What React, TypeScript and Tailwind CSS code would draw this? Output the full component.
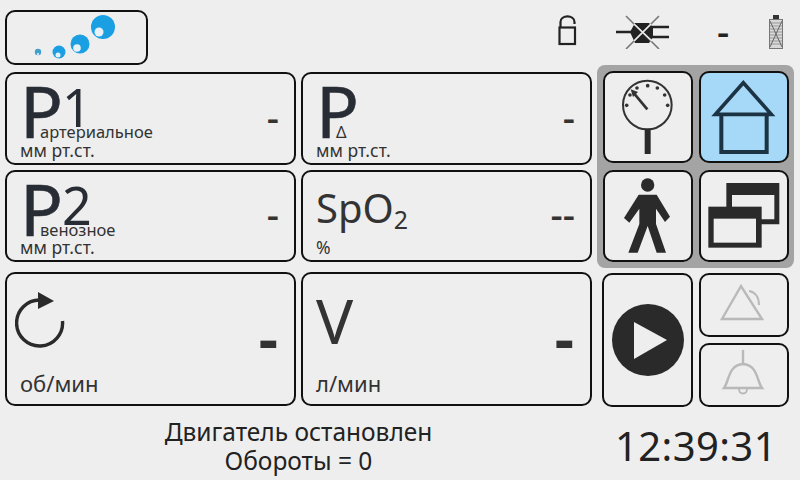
import type { ReactNode } from 'react'

const font = "font-['Noto_Sans',sans-serif]"

function Logo() {
  return (
    <svg viewBox="0 0 139 51" className="h-[51px] w-[139px]">
      <circle cx="96" cy="15" r="12" fill="#1a9fe3" />
      <circle cx="92" cy="20" r="4.5" fill="#e8f2f6" />
      <circle cx="73" cy="32" r="9.5" fill="#1a9fe3" />
      <circle cx="70" cy="36" r="3.8" fill="#e8f2f6" />
      <circle cx="52" cy="40" r="6.5" fill="#1a9fe3" />
      <circle cx="51" cy="43" r="2.5" fill="#e8f2f6" />
      <circle cx="31" cy="40" r="3.2" fill="#3f9fce" />
      <circle cx="31" cy="42" r="1.1" fill="#e8f2f6" />
    </svg>
  )
}

function Lock() {
  return (
    <svg viewBox="0 0 20 36" className="h-[36px] w-[20px]">
      <rect x="2.5" y="14.5" width="15.5" height="16.5" fill="none" stroke="#222" strokeWidth="2.2" />
      <path d="M3.5 14V9c0-7.500 14-7.500 14 0v2" fill="none" stroke="#222" strokeWidth="2.2" />
    </svg>
  )
}

function Connector() {
  return (
    <svg viewBox="0 0 56 36" className="h-[36px] w-[56px]">
      <path d="M1 19h16M37 14h17M37 24h17" stroke="#222" strokeWidth="2.4" />
      <path d="M15 19l5-9h14l4 4v10l-4 6H20z" fill="#222" />
      <path d="M11 3l33 33M44 3L11 36" stroke="#777" strokeWidth="1.6" />
      <path d="M19 11l18 17M36 11L19 28" stroke="#eee" strokeWidth="1.6" />
    </svg>
  )
}

function Battery() {
  return (
    <svg viewBox="0 0 16 36" className="h-[36px] w-[16px]">
      <rect x="5" y="2" width="6" height="4" fill="#333" />
      <rect x="1.5" y="6.500" width="13" height="29" fill="#d8d8d8" stroke="#777" strokeWidth="1" />
      <path d="M2 10h12M2 13h12M2 16h12M2 19h12M2 22h12M2 25h12M2 28h12M2 31h12" stroke="#999" strokeWidth="1" />
      <path d="M2 8l12 26M14 8L2 34" stroke="#666" strokeWidth="1" />
    </svg>
  )
}

function Gauge() {
  const dots = [
    [110, 136], [120, 105], [141, 84], [173, 77], [202, 84], [224, 105], [233, 136],
  ]
  return (
    <svg viewBox="45 39 258 264" className="size-full">
      <circle cx="172" cy="135" r="73" fill="none" stroke="#333" strokeWidth="6" />
      {dots.map(([x, y]) => (
        <circle key={x} cx={x} cy={y} r="5.5" fill="#333" />
      ))}
      <path d="M172 148l-40-48" stroke="#333" strokeWidth="8" />
      <path d="M122 88l22 8-15 15z" fill="#333" />
      <rect x="164" y="208" width="18" height="74" fill="#2a2a2a" />
    </svg>
  )
}

function House() {
  return (
    <svg viewBox="335 39 258 264" className="size-full">
      <path d="M462 68L378 163H546Z" fill="none" stroke="#1c3343" strokeWidth="11" />
      <path d="M396 163V276H532V163" fill="none" stroke="#1c3343" strokeWidth="12" />
    </svg>
  )
}

function Person() {
  return (
    <svg viewBox="45 336 258 264" className="size-full">
      <circle cx="173" cy="375" r="20" fill="#2a2a2a" />
      <path
        d="M146 404H200L240 470 225 486 198 446V492L228 578H200L173 498 143 578H115L148 492V446L118 488 102 474Z"
        fill="#2a2a2a"
      />
    </svg>
  )
}

function Windows() {
  return (
    <svg viewBox="335 336 258 264" className="size-full">
      <path fillRule="evenodd" d="M411 369H570V493H411ZM428 405V478H555V405Z" fill="#2a2a2a" />
      <rect x="357" y="440" width="160" height="123" fill="#2a2a2a" />
      <rect x="373" y="476" width="127" height="72" fill="#eee" />
    </svg>
  )
}

function Play() {
  return (
    <svg viewBox="0 0 72 72" className="h-[72px] w-[72px]">
      <circle cx="36" cy="36" r="36" fill="#2a2a2a" />
      <path d="M22 18L55 36 22 55Z" fill="#eee" />
    </svg>
  )
}

function AlarmTriangle() {
  return (
    <svg viewBox="0 0 50 44" className="h-[44px] w-[50px]">
      <path d="M22 3L3 36H43Z" fill="none" stroke="#b9b9b9" strokeWidth="2.4" />
      <path d="M30 8c6 1 10 6 10 14" fill="none" stroke="#b9b9b9" strokeWidth="2" />
    </svg>
  )
}

function Bell() {
  return (
    <svg viewBox="0 0 50 52" className="h-[52px] w-[50px]">
      <path d="M24 1v14" stroke="#b9b9b9" strokeWidth="2.4" />
      <path d="M5 39c5-6 4-23 19-24 15 1 14 18 19 24Z" fill="none" stroke="#b9b9b9" strokeWidth="2.4" />
      <path d="M20 40c0 6 8 6 8 0" fill="none" stroke="#b9b9b9" strokeWidth="1.8" />
    </svg>
  )
}

function Rotation() {
  return (
    <svg viewBox="0 0 56 60" className="h-[60px] w-[56px]">
      <path d="M47.500 33A23 23 0 1 1 25 12" fill="none" stroke="#2a2a2a" strokeWidth="3.4" />
      <path d="M23 4L39 13 23 21Z" fill="#2a2a2a" />
    </svg>
  )
}

type CardProps = {
  label: ReactNode
  sub?: string
  unit: string
  value: string
}

function Card({ label, sub, unit, value }: CardProps) {
  return (
    <div className="flex h-full items-center justify-between rounded-[10px] border-2 border-[#111] pl-[13px] pr-[15px]">
      <div className="flex h-full flex-col justify-between pb-[3px]">
        <div className="relative h-[60px]">
          {label}
          {sub && (
            <span className="absolute left-[20px] top-[48px] text-[16.5px] leading-[20px] text-[#333]">{sub}</span>
          )}
        </div>
        <span className="text-[17.5px] leading-[20px] text-[#333]">{unit}</span>
      </div>
      <span className="mb-[4px] text-[38px] font-medium leading-none text-[#333]">{value}</span>
    </div>
  )
}

function BigP({ children }: { children?: ReactNode }) {
  return (
    <span className="-mt-[9px] block whitespace-nowrap text-[71px] leading-[84px] text-[#282c34]">
      <span className="[-webkit-text-stroke:0.6px_#282c34]">P</span>
      <span className="-ml-[1px] align-[11px] text-[52px]">{children}</span>
    </span>
  )
}

function IconButton({ children, active }: { children: ReactNode; active?: boolean }) {
  return (
    <div className={`rounded-[10px] border-2 border-[#111] ${active ? 'bg-[#a6d8f7]' : 'bg-[#eeeeee]'}`}>
      {children}
    </div>
  )
}

export default function App() {
  return (
    <div className={`${font} flex h-[480px] w-[800px] flex-col overflow-hidden bg-[#eeeeee] text-[#222]`}>
      <header className="flex h-[65px] items-start pl-[5px] pt-[10px]">
        <div className="h-[55px] w-[143px] rounded-[10px] border-2 border-[#111]">
          <Logo />
        </div>
        <div className="ml-[409px] flex items-center pt-[3px]">
          <Lock />
          <div className="ml-[38px]">
            <Connector />
          </div>
          <span className="ml-[46px] w-[10px] text-[38px] font-medium leading-[36px] text-[#222]">-</span>
          <div className="ml-[41px]">
            <Battery />
          </div>
        </div>
      </header>

      <main className="flex pl-[5px]">
        <div className="grid h-[341px] w-[587px] grid-cols-2 grid-rows-[93px_92px_139px] content-start gap-x-[5px] gap-y-[5px] pt-[7px]">
          <Card label={<BigP>1</BigP>} sub="артериальное" unit="мм рт.ст." value="-" />
          <Card label={<BigP />} sub="Δ" unit="мм рт.ст." value="-" />
          <Card label={<BigP>2</BigP>} sub="венозное" unit="мм рт.ст." value="-" />
          <Card
            label={
              <span className="block pt-[12px] text-[40px] leading-[48px] text-[#333]">
                SpO<sub className="text-[25px] leading-none">2</sub>
              </span>
            }
            unit="%"
            value="--"
          />
          <div className="mt-[5px] flex items-center justify-between rounded-[10px] border-2 border-[#111] pl-[8px] pr-[16px]">
            <div className="flex h-full flex-col justify-between pb-[8px] pt-[14px]">
              <Rotation />
              <span className="pl-[5px] text-[22px] leading-[26px] text-[#333]">об/мин</span>
            </div>
            <span className="-mt-[4px] text-[60px] font-bold leading-none text-[#333]">-</span>
          </div>
          <div className="mt-[5px] flex items-center justify-between rounded-[10px] border-2 border-[#111] pl-[13px] pr-[16px]">
            <div className="flex h-full flex-col justify-between pb-[8px] pt-[9px]">
              <span className="text-[62px] leading-[74px] text-[#333]">V</span>
              <span className="text-[22px] leading-[26px] text-[#333]">л/мин</span>
            </div>
            <span className="-mt-[4px] text-[60px] font-bold leading-none text-[#333]">-</span>
          </div>
        </div>

        <div className="ml-[5px] flex w-[197px] flex-col">
          <div className="grid h-[203px] grid-cols-[90px_90px] grid-rows-[92px_92px] gap-x-[6px] gap-y-[7px] rounded-[8px] bg-[#a4a4a4] pl-[6px] pt-[6px]">
            <IconButton><Gauge /></IconButton>
            <IconButton active><House /></IconButton>
            <IconButton><Person /></IconButton>
            <IconButton><Windows /></IconButton>
          </div>
          <div className="ml-[5px] mt-[5px] grid h-[134px] grid-cols-[91px_90px] grid-rows-2 gap-x-[6px] gap-y-[6px]">
            <div className="row-span-2 flex items-center justify-center rounded-[10px] border-2 border-[#111]">
              <Play />
            </div>
            <div className="flex items-center justify-center rounded-[10px] border-2 border-[#111]">
              <AlarmTriangle />
            </div>
            <div className="flex items-center justify-center rounded-[10px] border-2 border-[#111]">
              <Bell />
            </div>
          </div>
        </div>
      </main>

      <footer className="flex flex-1 items-center pt-[4px]">
        <div className="w-[597px] text-center text-[24.5px] leading-[29px] text-[#222]">
          <div>Двигатель остановлен</div>
          <div>Обороты = 0</div>
        </div>
        <div className="ml-[18px] text-[40px] leading-none tracking-[0.4px] text-[#222]">12:39:31</div>
      </footer>
    </div>
  )
}
